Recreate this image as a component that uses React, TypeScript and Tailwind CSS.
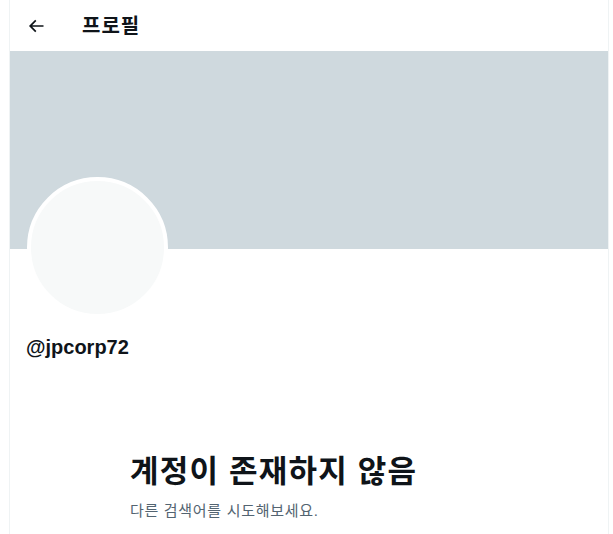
import React from 'react';

const ArrowBack = () => (
  <svg viewBox="0 0 24 24" className="h-5 w-5 fill-[#0f1419]">
    <path d="M7.414 13l5.043 5.04-1.414 1.42L3.586 12l7.457-7.46 1.414 1.42L7.414 11H21v2H7.414z" />
  </svg>
);

export default function App() {
  return (
    <div
      className="min-h-[534px] w-full bg-white text-[#0f1419]"
      style={{ fontFamily: '"Liberation Sans", "Noto Sans CJK KR", sans-serif' }}
    >
      <div className="ml-[9px] min-h-[534px] w-[600px] border-x border-[#eff3f4]">
        {/* Header */}
        <div className="flex h-[51px] items-center px-4">
          <div className="flex w-14 items-center">
            <ArrowBack />
          </div>
          <h2 className="text-[20px] font-bold leading-6 tracking-[1px]">프로필</h2>
        </div>

        {/* Banner */}
        <div className="h-[198px] w-full bg-[#cfd9de]" />

        {/* Avatar + handle */}
        <div className="px-4">
          <div className="-mt-[72px] ml-px h-[141px] w-[141px] rounded-full border-4 border-white bg-[#f7f9f9]" />
          <div className="mt-[17px] text-[20px] font-bold leading-6">@jpcorp72</div>
        </div>

        {/* Empty state */}
        <div className="mt-[95px] pl-[120px]">
          <h1 className="text-[31px] font-bold leading-9 tracking-[1.2px]">계정이 존재하지 않음</h1>
          <p className="mt-[11px] text-[15px] leading-5 tracking-[0.7px] text-[#536471]">
            다른 검색어를 시도해보세요.
          </p>
        </div>
      </div>
    </div>
  );
}
